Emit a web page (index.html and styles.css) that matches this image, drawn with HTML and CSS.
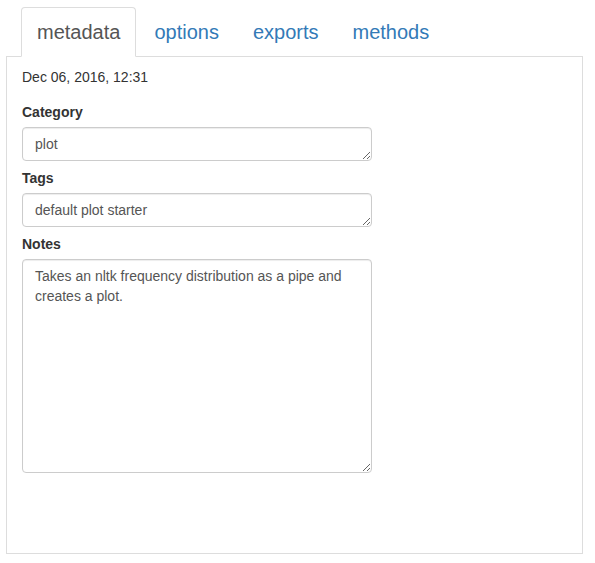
FILE: index.html
```html
<!DOCTYPE html>
<html>
<head>
<meta charset="utf-8">
<link rel="stylesheet" href="styles.css">
</head>
<body>
<div class="page">
  <ul class="tabs">
    <li class="tab active"><a>metadata</a></li>
    <li class="tab"><a>options</a></li>
    <li class="tab"><a>exports</a></li>
    <li class="tab"><a>methods</a></li>
  </ul>
  <div class="panel">
    <div class="date">Dec 06, 2016, 12:31</div>
    <div class="field">
      <label class="label">Category</label>
      <textarea class="input short">plot</textarea>
    </div>
    <div class="field">
      <label class="label">Tags</label>
      <textarea class="input short">default plot starter</textarea>
    </div>
    <div class="field">
      <label class="label">Notes</label>
      <textarea class="input tall">Takes an nltk frequency distribution as a pipe and creates a plot.</textarea>
    </div>
  </div>
</div>
</body>
</html>
```

FILE: styles.css
```css
* { box-sizing: border-box; }
html, body { margin: 0; padding: 0; background: #fff; }
body {
  font-family: "Liberation Sans", Arial, Helvetica, sans-serif;
  font-size: 14px;
  line-height: 20px;
  color: #333;
}
.page {
  padding: 7px 12px 0 6px;
}
.tabs {
  list-style: none;
  margin: 0;
  padding: 0 0 0 15px;
  display: flex;
  border-bottom: 1px solid #ddd;
}
.tab {
  margin: 0 2px -1px 0;
}
.tab a {
  display: block;
  padding: 10px 15px;
  font-size: 20px;
  line-height: 28px;
  color: #337ab7;
  border: 1px solid transparent;
  border-radius: 4px 4px 0 0;
  cursor: pointer;
}
.tab.active a {
  color: #555;
  background: #fff;
  border-color: #ddd #ddd transparent #ddd;
}
.panel {
  border: 1px solid #ddd;
  border-top: none;
  height: 497px;
  padding: 10px 15px;
}
.date {
  margin-bottom: 15px;
}
.field {
  margin-bottom: 7px;
}
.label {
  display: block;
  font-weight: bold;
  margin-bottom: 5px;
}
.input {
  display: block;
  width: 350px;
  padding: 6px 12px;
  font-family: "Liberation Sans", Arial, Helvetica, sans-serif;
  font-size: 14px;
  line-height: 20px;
  color: #555;
  background: #fff;
  border: 1px solid #ccc;
  border-radius: 4px;
  box-shadow: inset 0 1px 1px rgba(0,0,0,.075);
  margin: 0;
  resize: vertical;
}
.input.short { height: 34px; }
.input.tall { height: 214px; }
```
